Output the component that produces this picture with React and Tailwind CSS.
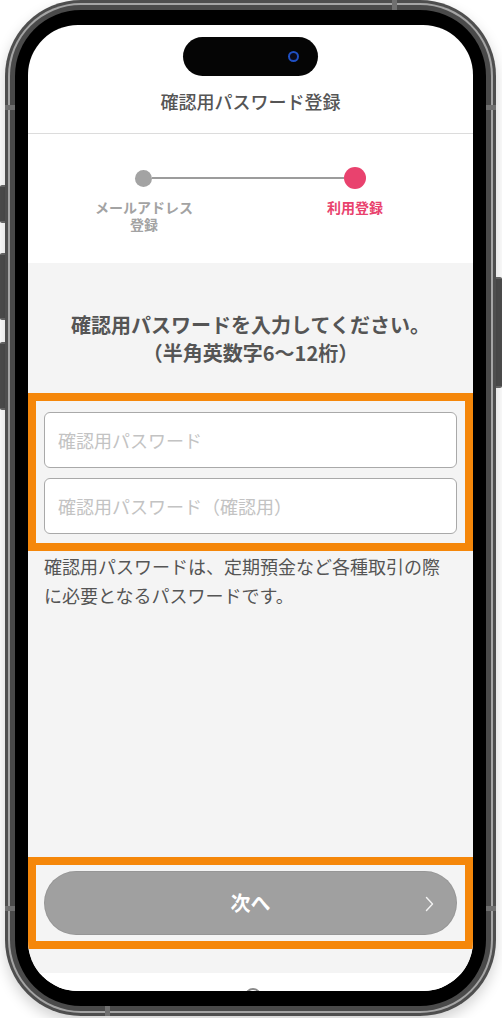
import React from "react";

export default function App() {
  return (
    <div className="relative w-[502px] h-[1018px] bg-white overflow-hidden font-[family-name:'Noto_Sans_CJK_JP','Noto_Sans',sans-serif]">
      {/* side buttons */}
      <div className="absolute left-0 top-[185px] w-[6px] h-[38px] rounded-l-[2px] bg-[#4d4d4d] border-y-2 border-[#6a6a6a]" />
      <div className="absolute left-0 top-[253px] w-[6px] h-[67px] rounded-l-[2px] bg-[#4d4d4d] border-y-2 border-[#6a6a6a]" />
      <div className="absolute left-0 top-[342px] w-[6px] h-[68px] rounded-l-[2px] bg-[#4d4d4d] border-y-2 border-[#6a6a6a]" />
      <div className="absolute right-0 top-[277px] w-[7px] h-[111px] rounded-r-[2px] bg-[#4d4d4d] border-y-2 border-[#6a6a6a]" />

      {/* phone frame */}
      <div className="relative ml-[5px] w-[491px] h-[1016px] rounded-[76px] bg-[#4e4e4e] p-[3px] shadow-[0_6px_14px_rgba(0,0,0,0.18)]">
        <div className="h-full rounded-[73px] bg-[#a5a5a5] p-[2px]">
          <div className="h-full rounded-[71px] bg-[#4a4a4a] p-[5px]">
            <div className="h-full rounded-[66px] bg-black px-[13px] py-[15px]">
              {/* screen */}
              <div className="relative h-full rounded-[50px] overflow-hidden bg-white flex flex-col">
                {/* dynamic island */}
                <div className="absolute left-[155px] top-[12px] w-[135px] h-[39px] rounded-full bg-[#050505] flex items-center justify-end pr-[19px]">
                  <div className="w-[11px] h-[11px] rounded-full border-2 border-[#1f4fc2] bg-[#0a0a1a]" />
                </div>

                {/* header */}
                <div className="h-[109px] border-b border-[#dcdcdc] flex items-end justify-center pb-[20px]">
                  <span className="text-[18px] leading-[24px] font-medium text-[#555555]">確認用パスワード登録</span>
                </div>

                {/* stepper */}
                <div className="h-[129px] bg-white pt-[33px]">
                  <div className="flex items-center pl-[107px] pr-[107px] h-[22px]">
                    <div className="w-[17px] h-[17px] rounded-full bg-[#a3a3a3]" />
                    <div className="flex-1 h-[1.5px] bg-[#9c9c9c]" />
                    <div className="w-[22px] h-[22px] rounded-full bg-[#e9426e]" />
                  </div>
                  <div className="flex justify-between pl-[56px] pr-[58px] mt-[10px]">
                    <div className="w-[120px] text-center text-[14px] leading-[17px] font-bold text-[#a3a3a3]">
                      メールアドレス
                      <br />
                      登録
                    </div>
                    <div className="w-[120px] text-center text-[14px] leading-[17px] font-bold text-[#e9426e]">
                      利用登録
                    </div>
                  </div>
                </div>

                {/* gray content */}
                <div className="flex-1 bg-[#f4f4f4] flex flex-col pt-[48px]">
                  <p className="text-center text-[20px] leading-[28px] font-bold text-[#555555]">
                    確認用パスワードを入力してください。
                    <br />
                    （半角英数字6〜12桁）
                  </p>

                  <div className="mt-[26px] border-[8px] border-[#f5870a] px-[8px] pt-[11px] pb-[9px] flex flex-col gap-[10px]">
                    <input
                      type="password"
                      placeholder="確認用パスワード"
                      className="h-[56px] w-full rounded-[6px] border border-[#a9a9a9] bg-white px-[13px] text-[18px] outline-none placeholder:text-[#c3c3c3]"
                    />
                    <input
                      type="password"
                      placeholder="確認用パスワード（確認用）"
                      className="h-[56px] w-full rounded-[6px] border border-[#a9a9a9] bg-white px-[13px] text-[18px] outline-none placeholder:text-[#c3c3c3]"
                    />
                  </div>

                  <p className="mt-[1px] px-[16px] text-[18px] leading-[29px] text-[#555555]">
                    確認用パスワードは、定期預金など各種取引の際に必要となるパスワードです。
                  </p>

                  <div className="flex-1" />

                  <div className="mb-[24px] border-[8px] border-[#f5870a] px-[8px] py-[6px]">
                    <div className="relative h-[64px] rounded-full bg-[#a0a0a0] shadow-[inset_0_0_0_1px_rgba(0,0,0,0.06)] flex items-center justify-center">
                      <span className="text-[20px] font-bold text-white">次へ</span>
                      <svg className="absolute right-[23px] top-[25px]" width="9" height="16" viewBox="0 0 9 16" fill="none">
                        <polyline points="1.5,1.5 7.5,8 1.5,14.5" stroke="#f2f2f2" strokeWidth="1.4" strokeLinecap="round" strokeLinejoin="round" />
                      </svg>
                    </div>
                  </div>
                </div>

                {/* bottom white bar */}
                <div className="h-[18px] bg-white relative flex justify-center">
                  <div className="mt-[15px] ml-[4px] w-[16px] h-[16px] rounded-full border-2 border-[#8a8a8a]" />
                </div>
              </div>
            </div>
          </div>
        </div>

        {/* antenna lines */}
        <div className="absolute left-[387px] top-0 w-[5px] h-[10px] bg-[#707070]" />
        <div className="absolute left-0 top-[105px] w-[10px] h-[5px] bg-[#707070]" />
        <div className="absolute right-0 top-[105px] w-[10px] h-[5px] bg-[#707070]" />
        <div className="absolute left-0 top-[906px] w-[10px] h-[5px] bg-[#707070]" />
        <div className="absolute right-0 top-[906px] w-[10px] h-[5px] bg-[#707070]" />
        <div className="absolute left-[100px] bottom-0 w-[5px] h-[10px] bg-[#707070]" />
      </div>
    </div>
  );
}
